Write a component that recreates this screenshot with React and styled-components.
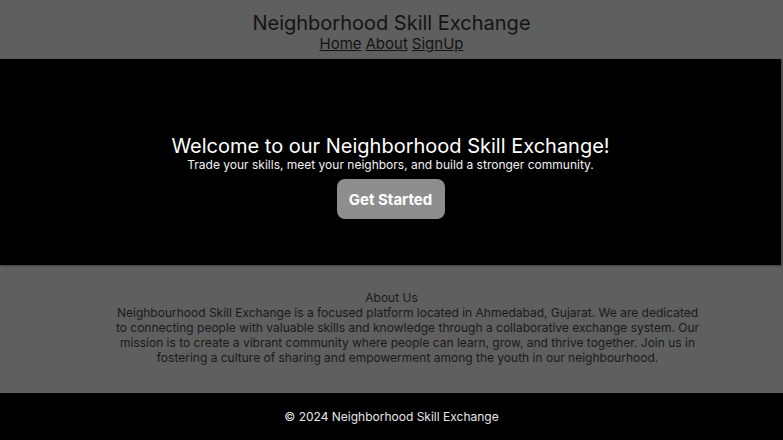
import React from "react";
import styled, { createGlobalStyle } from "styled-components";

const GlobalStyle = createGlobalStyle`
  html, body {
    margin: 0;
    padding: 0;
    background: #5f5f5f;
    font-family: Inter, "Noto Sans", sans-serif;
  }
`;

const Page = styled.div`
  display: flex;
  flex-direction: column;
  min-height: 440px;
`;

const Header = styled.header`
  display: flex;
  flex-direction: column;
  align-items: center;
  padding: 11px 0 6px;
  color: #141414;
`;

const Title = styled.h1`
  margin: 0;
  font-size: 20px;
  font-weight: 400;
  line-height: 24px;
`;

const Nav = styled.nav`
  display: flex;
  gap: 4px;
  font-size: 15px;
  line-height: 18px;
`;

const NavLink = styled.a`
  color: #141414;
  text-decoration: underline;
  cursor: pointer;
`;

const Hero = styled.section`
  display: flex;
  flex-direction: column;
  align-items: center;
  width: calc(100% - 2px);
  padding: 75px 0 46px;
  background: #000;
  color: #fff;
  box-shadow: 1px 1px 2px rgba(0, 0, 0, 0.35);
`;

const HeroTitle = styled.h2`
  margin: 0;
  font-size: 20px;
  font-weight: 400;
  line-height: 24px;
`;

const HeroText = styled.p`
  margin: 0;
  font-size: 12px;
  line-height: 14px;
  color: #f2f2f2;
`;

const Button = styled.button`
  margin-top: 7px;
  width: 108px;
  height: 40px;
  border: none;
  border-radius: 8px;
  background: #8e8e8e;
  color: #fff;
  font-family: inherit;
  font-size: 15px;
  font-weight: 700;
  cursor: pointer;
`;

const About = styled.section`
  display: flex;
  flex-direction: column;
  align-items: center;
  padding: 25px 0 28px;
  color: #1a1a1a;
  font-size: 12px;
  line-height: 15px;
  text-align: center;
`;

const AboutTitle = styled.h3`
  margin: 0;
  font-size: 12px;
  font-weight: 400;
  line-height: 15px;
`;

const AboutText = styled.p`
  margin: 0 0 0 32px;
  max-width: 590px;
`;

const Footer = styled.footer`
  display: flex;
  align-items: center;
  justify-content: center;
  margin-top: auto;
  height: 47px;
  background: #000;
  color: #e8e8e8;
  font-size: 12px;
`;

export default function App() {
  return (
    <>
      <GlobalStyle />
      <Page>
        <Header>
          <Title>Neighborhood Skill Exchange</Title>
          <Nav>
            <NavLink>Home</NavLink>
            <NavLink>About</NavLink>
            <NavLink>SignUp</NavLink>
          </Nav>
        </Header>
        <Hero>
          <HeroTitle>Welcome to our Neighborhood Skill Exchange!</HeroTitle>
          <HeroText>Trade your skills, meet your neighbors, and build a stronger community.</HeroText>
          <Button>Get Started</Button>
        </Hero>
        <About>
          <AboutTitle>About Us</AboutTitle>
          <AboutText>
            Neighbourhood Skill Exchange is a focused platform located in Ahmedabad, Gujarat. We are dedicated
            to connecting people with valuable skills and knowledge through a collaborative exchange system. Our
            mission is to create a vibrant community where people can learn, grow, and thrive together. Join us in
            fostering a culture of sharing and empowerment among the youth in our neighbourhood.
          </AboutText>
        </About>
        <Footer>© 2024 Neighborhood Skill Exchange</Footer>
      </Page>
    </>
  );
}
